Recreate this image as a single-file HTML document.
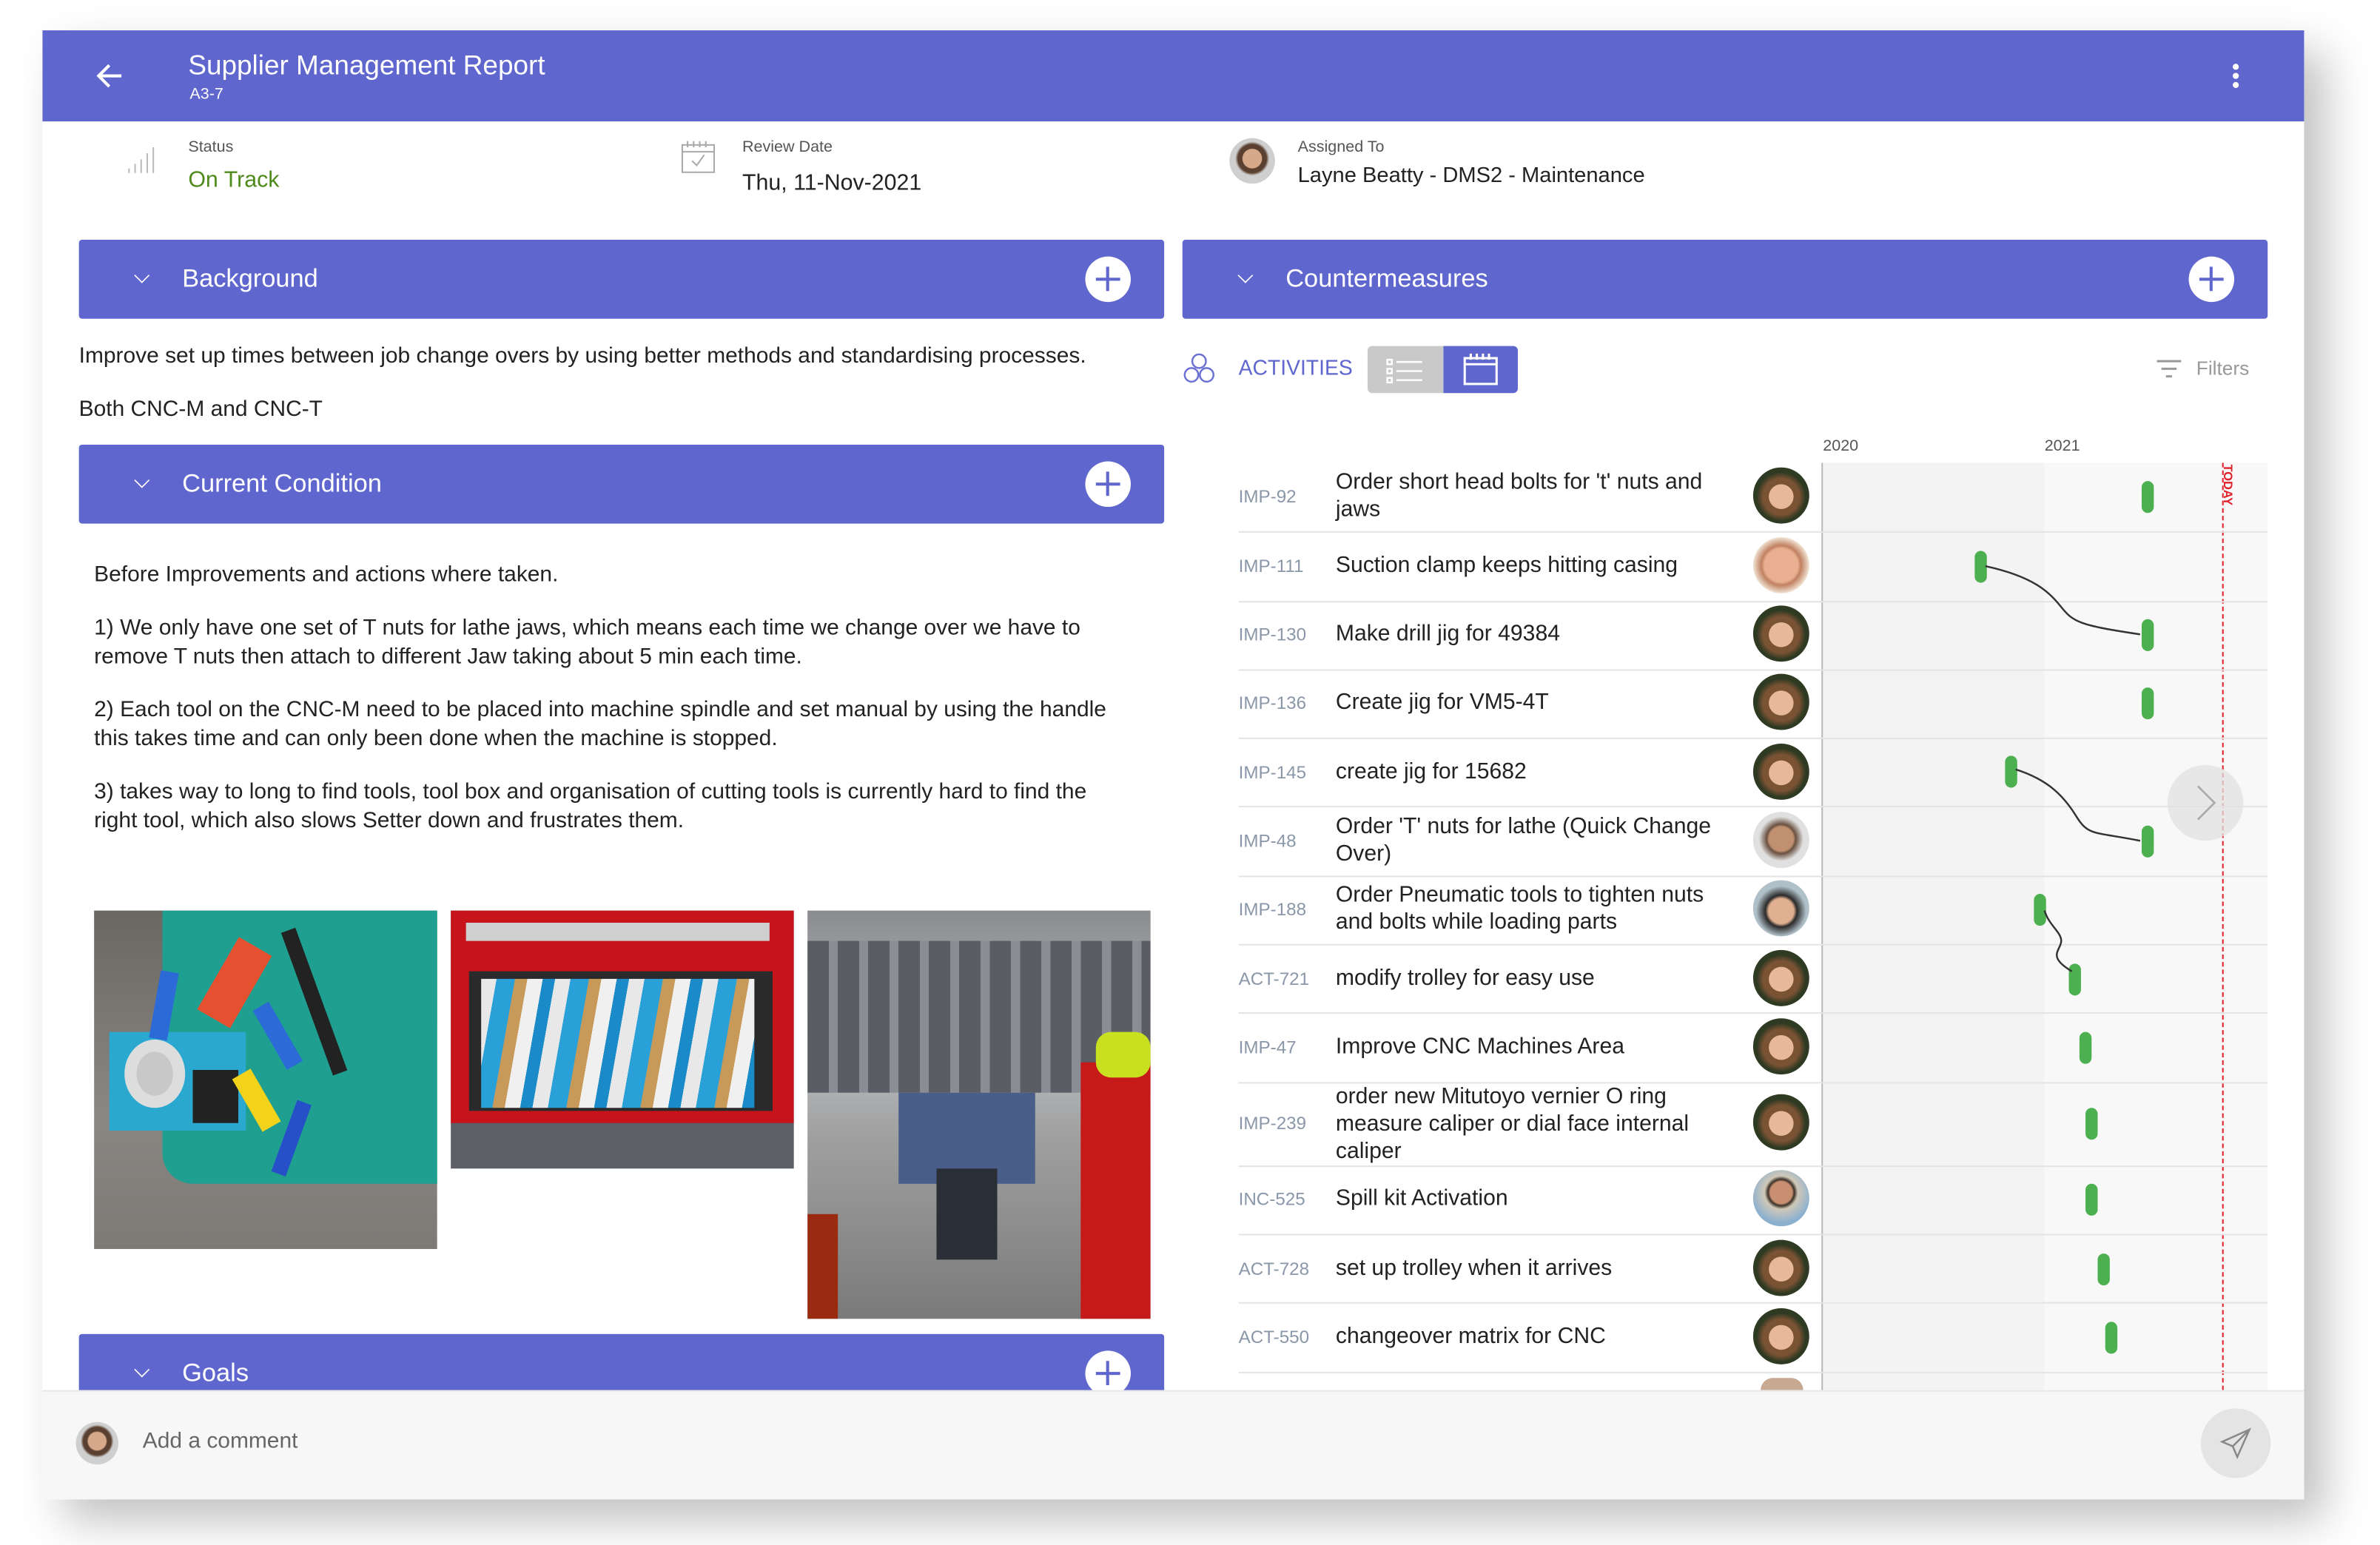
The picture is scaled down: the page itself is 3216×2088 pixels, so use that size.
<!DOCTYPE html>
<html><head><meta charset="utf-8"><style>
*{margin:0;padding:0;box-sizing:border-box}
html,body{width:3216px;height:2088px;overflow:hidden;background:#fff}
#w{position:absolute;left:0;top:0;width:1568px;height:1018px;transform:scale(2.051);transform-origin:0 0;font-family:"Liberation Sans",sans-serif;color:#222}
.a{position:absolute}
.bar{position:absolute;background:#5f66cd;border-radius:2px;color:#fff;height:52px}
.bar .t{position:absolute;left:68px;top:16px;font-size:16.8px}
.bar .ch{position:absolute;left:37px;top:19px;width:9px;height:9px;border-right:1.6px solid #fff;border-bottom:1.6px solid #fff;transform:rotate(45deg) scale(.8,.8)}
.bar .pl{position:absolute;right:22px;top:11px;width:30px;height:30px;border-radius:50%;background:#fff}
.pl:before,.pl:after{content:"";position:absolute;background:#5f66cd;left:7px;top:14px;width:16px;height:1.5px}
.pl:after{transform:rotate(90deg)}
.p{position:absolute;left:62px;font-size:14.6px;line-height:18.5px;color:#222;width:680px}
.id{position:absolute;left:816px;font-size:11.8px;color:#8a97a8}
.tt{position:absolute;left:880px;font-size:14.7px;line-height:18px;color:#222;width:268px}
.av{position:absolute;left:1155px;width:37px;height:37px;border-radius:50%;background:radial-gradient(circle at 50% 52%,#e8b89a 0 30%,#7a5234 31% 45%,#2f3a22 60%)}
.sep{position:absolute;left:816px;width:678px;height:1px;background:#e4e4e4}
.g{position:absolute;width:8px;height:21px;border-radius:4px;background:#4caf50}
</style></head><body><div id="w">
<div class="a" style="left:28px;top:20px;width:1490px;height:968px;box-shadow:14px 14px 28px rgba(0,0,0,.25);background:#fff"></div>
<div class="a" style="left:28px;top:20px;width:1490px;height:60px;background:#5f66cd"></div>
<svg class="a" style="left:63px;top:41px" width="20" height="18" viewBox="0 0 20 18"><path d="M17 9H3M9 2L2 9l7 7" stroke="#fff" stroke-width="2" fill="none"/></svg>
<div class="a" style="left:124px;top:33px;font-size:18px;color:#fff">Supplier Management Report</div>
<div class="a" style="left:125px;top:56px;font-size:10.5px;color:#fff">A3-7</div>
<div class="a" style="left:1471px;top:42px;width:4px;height:4px;border-radius:50%;background:#fff;box-shadow:0 6px 0 #fff,0 12px 0 #fff"></div>
<svg class="a" style="left:83px;top:92px" width="24" height="24"><g stroke="#bbb" stroke-width="1"><path d="M2 22v-3M6 22v-6M10 22v-9M14 22v-13M18 22v-17"/></g></svg>
<div class="a" style="left:124px;top:91px;font-size:10.5px;color:#555">Status</div>
<div class="a" style="left:124px;top:111px;font-size:14.8px;color:#4f8a1c">On Track</div>
<svg class="a" style="left:448px;top:91px" width="24" height="24"><rect x="1.5" y="4.5" width="21" height="18" fill="none" stroke="#aaa"/><path d="M1.5 9h21M5 2v4M9 2v4M13 2v4M17 2v4M8 15l3 3 5-7" stroke="#aaa" fill="none"/></svg>
<div class="a" style="left:489px;top:91px;font-size:10.5px;color:#555">Review Date</div>
<div class="a" style="left:489px;top:113px;font-size:14.8px;color:#222">Thu, 11-Nov-2021</div>
<div class="av" style="left:810px;top:91px;width:30px;height:30px;background:radial-gradient(circle at 50% 45%,#d6a98a 0 28%,#5a4030 30% 42%,#cfcfcf 50%)"></div>
<div class="a" style="left:855px;top:91px;font-size:10.5px;color:#555">Assigned To</div>
<div class="a" style="left:855px;top:108px;font-size:14.2px;color:#222">Layne Beatty - DMS2 - Maintenance</div>
<div class="bar" style="left:52px;top:158px;width:715px"><div class="ch"></div><div class="t">Background</div><div class="pl"></div></div>
<div class="p" style="left:52px;top:226px;width:720px">Improve set up times between job change overs by using better methods and standardising processes.</div>
<div class="p" style="left:52px;top:261px">Both CNC-M and CNC-T</div>
<div class="bar" style="left:52px;top:293px;width:715px"><div class="ch"></div><div class="t">Current Condition</div><div class="pl"></div></div>
<div class="p" style="top:370px">Before Improvements and actions where taken.</div>
<div class="p" style="top:405px">1) We only have one set of T nuts for lathe jaws, which means each time we change over we have to remove T nuts then attach to different Jaw taking about 5 min each time.</div>
<div class="p" style="top:459px">2) Each tool on the CNC-M need to be placed into machine spindle and set manual by using the handle this takes time and can only been done when the machine is stopped.</div>
<div class="p" style="top:513px">3) takes way to long to find tools, tool box and organisation of cutting tools is currently hard to find the right tool, which also slows Setter down and frustrates them.</div>
<div class="a" style="left:62px;top:600px;width:226px;height:223px;overflow:hidden;background:linear-gradient(180deg,#6a6660,#8a8783 60%,#7d7a76)">
 <div class="a" style="left:45px;top:0;width:185px;height:180px;background:#1f9f90;border-radius:0 0 0 20px"></div>
 <div class="a" style="left:10px;top:80px;width:90px;height:65px;background:#2aa8d0"></div>
 <div class="a" style="left:20px;top:85px;width:40px;height:45px;border-radius:50%;background:#c8c8c8;border:8px solid #ddd"></div>
 <div class="a" style="left:65px;top:105px;width:30px;height:35px;background:#222"></div>
 <div class="a" style="left:80px;top:20px;width:25px;height:55px;background:#e55030;transform:rotate(30deg)"></div>
 <div class="a" style="left:115px;top:60px;width:12px;height:45px;background:#2c6ad8;transform:rotate(-30deg)"></div>
 <div class="a" style="left:100px;top:105px;width:14px;height:40px;background:#f2d21a;transform:rotate(-30deg)"></div>
 <div class="a" style="left:125px;top:125px;width:10px;height:50px;background:#2650c8;transform:rotate(20deg)"></div>
 <div class="a" style="left:140px;top:10px;width:10px;height:100px;background:#222;transform:rotate(-20deg)"></div>
 <div class="a" style="left:40px;top:40px;width:12px;height:45px;background:#2c6ad8;transform:rotate(10deg)"></div>
</div>
<div class="a" style="left:297px;top:600px;width:226px;height:170px;overflow:hidden;background:#5c6066">
 <div class="a" style="left:0;top:0;width:226px;height:140px;background:#c7141a"></div>
 <div class="a" style="left:12px;top:40px;width:200px;height:92px;background:#2a2a2a"></div>
 <div class="a" style="left:20px;top:45px;width:180px;height:85px;background:repeating-linear-gradient(100deg,#e8e8e8 0 10px,#2aa0d8 10px 22px,#c89a5a 22px 30px,#f0f0f0 30px 40px,#1a8ac8 40px 48px)"></div>
 <div class="a" style="left:10px;top:8px;width:200px;height:12px;background:#cfcfcf"></div>
</div>
<div class="a" style="left:532px;top:600px;width:226px;height:269px;overflow:hidden;background:linear-gradient(180deg,#8a8c90,#b8bcc0 35%,#a0a0a0 55%,#7a7a7a)">
 <div class="a" style="left:0;top:20px;width:226px;height:100px;background:repeating-linear-gradient(90deg,#5a5e64 0 14px,#8a8e94 14px 20px)"></div>
 <div class="a" style="left:60px;top:120px;width:90px;height:60px;background:#4a5e8a"></div>
 <div class="a" style="left:85px;top:170px;width:40px;height:60px;background:#2a2e36"></div>
 <div class="a" style="left:180px;top:100px;width:46px;height:169px;background:#c61a1a"></div>
 <div class="a" style="left:190px;top:80px;width:36px;height:30px;background:#c8e020;border-radius:10px"></div>
 <div class="a" style="left:0;top:200px;width:20px;height:69px;background:#9a2a10"></div>
</div>
<div class="bar" style="left:52px;top:879px;width:715px"><div class="ch"></div><div class="t">Goals</div><div class="pl"></div></div>
<div class="bar" style="left:779px;top:158px;width:715px"><div class="ch"></div><div class="t">Countermeasures</div><div class="pl"></div></div>
<svg class="a" style="left:779px;top:231px" width="22" height="24"><g fill="none" stroke="#6b72d4" stroke-width="1.2"><circle cx="11" cy="7" r="4.5"/><circle cx="6" cy="16" r="4.5"/><circle cx="16" cy="16" r="4.5"/></g></svg>
<div class="a" style="left:816px;top:235px;font-size:13.8px;color:#5f66cd">ACTIVITIES</div>
<div class="a" style="left:901px;top:228px;width:50px;height:31px;background:#c9c9c9;border-radius:3px 0 0 3px"></div>
<svg class="a" style="left:913px;top:235px" width="26" height="18"><g stroke="#fff" stroke-width="1.2" fill="none"><rect x="1" y="2" width="3" height="3"/><rect x="1" y="8" width="3" height="3"/><rect x="1" y="14" width="3" height="3"/><path d="M7 3.5h17M7 9.5h17M7 15.5h17"/></g></svg>
<div class="a" style="left:951px;top:228px;width:49px;height:31px;background:#5f66cd;border-radius:0 3px 3px 0"></div>
<svg class="a" style="left:963px;top:231px" width="26" height="24"><g stroke="#fff" stroke-width="1.5" fill="none"><rect x="2" y="5" width="21" height="17"/><path d="M2 9h21M6 2v4M10 2v4M14 2v4M18 2v4"/></g></svg>
<svg class="a" style="left:1420px;top:236px" width="18" height="14"><path d="M1 2h16M4 7h10M7 12h4" stroke="#999" stroke-width="1.5"/></svg>
<div class="a" style="left:1447px;top:235px;font-size:12.8px;color:#999">Filters</div>
<div class="a" style="left:1201px;top:288px;font-size:10.5px;color:#555">2020</div>
<div class="a" style="left:1347px;top:288px;font-size:10.5px;color:#555">2021</div>
<div class="a" style="left:1201px;top:305px;width:146px;height:611px;background:#f3f3f3"></div>
<div class="a" style="left:1347px;top:305px;width:147px;height:611px;background:#f8f8f8"></div>
<div class="a" style="left:1200px;top:305px;width:1px;height:611px;background:#b8b8b8"></div>
<div class="a" style="left:1464px;top:305px;width:0;height:611px;border-left:1.3px dashed #e0202a"></div>
<div class="a" style="left:1454px;top:315px;font-size:8px;font-weight:bold;color:#e0202a;transform:rotate(90deg);transform-origin:center">TODAY</div>
<div class="sep" style="top:350px"></div><div class="sep" style="top:396px"></div><div class="sep" style="top:441px"></div><div class="sep" style="top:486px"></div><div class="sep" style="top:531px"></div><div class="sep" style="top:577px"></div><div class="sep" style="top:622px"></div><div class="sep" style="top:667px"></div><div class="sep" style="top:713px"></div><div class="sep" style="top:768px"></div><div class="sep" style="top:813px"></div><div class="sep" style="top:858px"></div><div class="sep" style="top:904px"></div>

<div class="id" style="top:320px">IMP-92</div><div class="tt" style="top:309px">Order short head bolts for 't' nuts and jaws</div><div class="av" style="top:308px"></div><div class="g" style="left:1411px;top:317px"></div>
<div class="id" style="top:366px">IMP-111</div><div class="tt" style="top:364px">Suction clamp keeps hitting casing</div><div class="av" style="top:354px;background:radial-gradient(circle at 50% 50%,#e8b090 0 42%,#c08060 50%,#efe0d0 70%)"></div><div class="g" style="left:1301px;top:363px"></div>
<div class="id" style="top:411px">IMP-130</div><div class="tt" style="top:409px">Make drill jig for 49384</div><div class="av" style="top:399px"></div><div class="g" style="left:1411px;top:408px"></div>
<div class="id" style="top:456px">IMP-136</div><div class="tt" style="top:454px">Create jig for VM5-4T</div><div class="av" style="top:444px"></div><div class="g" style="left:1411px;top:453px"></div>
<div class="id" style="top:502px">IMP-145</div><div class="tt" style="top:500px">create jig for 15682</div><div class="av" style="top:490px"></div><div class="g" style="left:1321px;top:498px"></div>
<div class="id" style="top:547px">IMP-48</div><div class="tt" style="top:536px">Order 'T' nuts for lathe (Quick Change Over)</div><div class="av" style="top:535px;background:radial-gradient(circle at 50% 48%,#c09070 0 30%,#6a5040 36%,#e0e0e0 55%)"></div><div class="g" style="left:1411px;top:544px"></div>
<div class="id" style="top:592px">IMP-188</div><div class="tt" style="top:581px">Order Pneumatic tools to tighten nuts and bolts while loading parts</div><div class="av" style="top:580px;background:radial-gradient(circle at 50% 55%,#e0b090 0 30%,#2a2a2a 38%,#b0c0c8 60%)"></div><div class="g" style="left:1340px;top:589px"></div>
<div class="id" style="top:638px">ACT-721</div><div class="tt" style="top:636px">modify trolley for easy use</div><div class="av" style="top:626px"></div><div class="g" style="left:1363px;top:635px"></div>
<div class="id" style="top:683px">IMP-47</div><div class="tt" style="top:681px">Improve CNC Machines Area</div><div class="av" style="top:671px"></div><div class="g" style="left:1370px;top:680px"></div>
<div class="id" style="top:733px">IMP-239</div><div class="tt" style="top:714px">order new Mitutoyo vernier O ring measure caliper or dial face internal caliper</div><div class="av" style="top:721px"></div><div class="g" style="left:1374px;top:730px"></div>
<div class="id" style="top:783px">INC-525</div><div class="tt" style="top:781px">Spill kit Activation</div><div class="av" style="top:771px;background:radial-gradient(circle at 50% 40%,#c89070 0 25%,#3a3028 30%,#d0c8b8 38%,#8ab0d0 70%)"></div><div class="g" style="left:1374px;top:780px"></div>
<div class="id" style="top:829px">ACT-728</div><div class="tt" style="top:827px">set up trolley when it arrives</div><div class="av" style="top:817px"></div><div class="g" style="left:1382px;top:826px"></div>
<div class="id" style="top:874px">ACT-550</div><div class="tt" style="top:872px">changeover matrix for CNC</div><div class="av" style="top:862px"></div><div class="g" style="left:1387px;top:871px"></div>
<div class="av" style="top:908px;height:8px;border-radius:20px 20px 0 0;background:#c8a890;left:1160px;width:28px"></div>
<svg class="a" style="left:1200px;top:300px" width="300" height="360"><g fill="none" stroke="#333" stroke-width="1.2"><path d="M108 73C140 80 150 90 158 100S170 112 210 118"/><path d="M128 207C150 214 160 225 168 238S180 248 210 254"/><path d="M147 300C150 310 158 314 158 320S148 330 165 340"/></g></svg>
<div class="a" style="left:1428px;top:504px;width:50px;height:50px;border-radius:50%;background:rgba(225,225,225,.75)"></div>
<svg class="a" style="left:1445px;top:516px" width="18" height="26"><path d="M3 2l11 11L3 24" stroke="#aaa" stroke-width="1.3" fill="none"/></svg>
<div class="a" style="left:28px;top:916px;width:1490px;height:72px;background:#f7f7f7;border-top:1px solid #e8e8e8"></div>
<div class="av" style="left:50px;top:937px;width:28px;height:28px;background:radial-gradient(circle at 50% 45%,#d6a98a 0 28%,#5a4030 32% 44%,#cfcfcf 52%)"></div>
<div class="a" style="left:94px;top:942px;font-size:14.6px;color:#666">Add a comment</div>
<div class="a" style="left:1450px;top:928px;width:46px;height:46px;border-radius:50%;background:#e4e4e4"></div>
<svg class="a" style="left:1461px;top:939px" width="24" height="24"><path d="M21 3L3 11l7 3 3 7z M21 3L10 14" stroke="#888" stroke-width="1.2" fill="none"/></svg>
</div></body></html>
